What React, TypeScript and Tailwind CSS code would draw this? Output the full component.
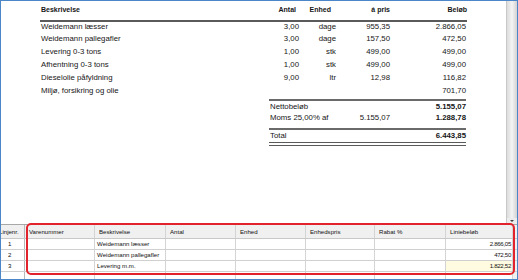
import React from "react";

const rows = [
  { d: "Weidemann læsser", a: "3,00", e: "dage", p: "955,35", b: "2.866,05" },
  { d: "Weidemann pallegafler", a: "3,00", e: "dage", p: "157,50", b: "472,50" },
  { d: "Levering 0-3 tons", a: "1,00", e: "stk", p: "499,00", b: "499,00" },
  { d: "Afhentning 0-3 tons", a: "1,00", e: "stk", p: "499,00", b: "499,00" },
  { d: "Dieselolie påfyldning", a: "9,00", e: "ltr", p: "12,98", b: "116,82" },
  { d: "Miljø, forsikring og olie", a: "", e: "", p: "", b: "701,70" },
];

const gridCols = "grid grid-cols-[24px_70px_71px_70px_70px_69px_71px_67px_1fr]";

const headers = ["Varenummer", "Beskrivelse", "Antal", "Enhed", "Enhedspris", "Rabat %", "Liniebeløb"];

const gridRows = [
  { n: "1", d: "Weidemann læsser", v: "2.866,05", hl: false },
  { n: "2", d: "Weidemann pallegafler", v: "472,50", hl: false },
  { n: "3", d: "Levering m.m.", v: "1.822,52", hl: true },
  { n: "", d: "", v: "", hl: false },
];

export default function App() {
  return (
    <div className="relative w-[518px] h-[280px] overflow-hidden bg-white border border-[#4a86c8] font-['Liberation_Sans',Arial,sans-serif] text-[#161616]">
      {/* Document area */}
      <div className="flex h-[223px]">
        <div className="flex-1 pl-[40px]">
          <div className="grid grid-cols-[219px_39px_37px_54px_76px] h-[19px] items-center text-[7px] font-bold">
            <div>Beskrivelse</div>
            <div className="text-right pr-[3px]">Antal</div>
            <div className="text-right pr-[5px]">Enhed</div>
            <div className="text-right">á pris</div>
            <div className="text-right -mr-[1px]">Beløb</div>
          </div>
          <div className="w-[427px] -ml-[1px] h-[2px] bg-[#5a5a5a]" />
          <div className="-mt-[2px] text-[7.8px]">
            {rows.map((r, i) => (
              <div key={i} className="grid grid-cols-[219px_39px_37px_54px_76px] h-[12.8px] items-center">
                <div className="whitespace-nowrap">{r.d}</div>
                <div className="text-right">{r.a}</div>
                <div className="text-right">{r.e}</div>
                <div className="text-right">{r.p}</div>
                <div className="text-right">{r.b}</div>
              </div>
            ))}
          </div>
          <div className="ml-[228px] w-[197px] mt-[2px] h-[2px] bg-[#6a6a6a]" />
          <div className="ml-[229px] text-[7.8px]">
            <div className="grid grid-cols-[66px_54px_76px] h-[11px] items-center">
              <div>Nettobeløb</div>
              <div />
              <div className="text-right font-bold">5.155,07</div>
            </div>
            <div className="grid grid-cols-[66px_54px_76px] h-[12px] items-center">
              <div className="whitespace-nowrap">Moms 25,00% af</div>
              <div className="text-right">5.155,07</div>
              <div className="text-right font-bold">1.288,78</div>
            </div>
          </div>
          <div className="ml-[228px] w-[197px] mt-[4px] h-[2px] bg-[#6a6a6a]" />
          <div className="ml-[229px] text-[7.8px]">
            <div className="grid grid-cols-[66px_54px_76px] h-[11px] items-center">
              <div>Total</div>
              <div />
              <div className="text-right font-bold">6.443,85</div>
            </div>
          </div>
          <div className="ml-[228px] w-[197px] mt-[1px] h-[1.5px] bg-[#5a5a5a]" />
          <div className="ml-[228px] w-[197px] mt-[1.5px] h-[1.5px] bg-[#5a5a5a]" />
        </div>
        {/* Scrollbar */}
        <div className="w-[11px] flex flex-col border-l border-[#c8c8c8]">
          <div className="flex-1 bg-gradient-to-r from-[#dcdcdc] via-[#f4f4f4] to-[#d2d2d2]" />
          <div className="h-[6px] bg-[#ececec] flex items-center justify-center">
            <div className="w-0 h-0 border-l-[2px] border-r-[2px] border-t-[2px] border-l-transparent border-r-transparent border-t-[#404040]" />
          </div>
        </div>
      </div>

      {/* Grid */}
      <div className="border-t border-[#a8a8a8] text-[6.1px] text-[#111]">
        <div className={`${gridCols} h-[14px] bg-[#f0f0f0] border-b border-[#c8c8c8]`}>
          <div className="overflow-hidden whitespace-nowrap border-r border-[#b8b8b8] flex items-center">
            <span className="-ml-[2px]">Linjenr.</span>
          </div>
          {headers.map((h) => (
            <div key={h} className="border-r border-[#d4d4d4] flex items-center pl-[4px] whitespace-nowrap">
              {h}
            </div>
          ))}
          <div />
        </div>
        {gridRows.map((r, i) => (
          <div key={i} className={`${gridCols} h-[11px] border-b border-[#d0d0d0]`}>
            <div className="border-r border-[#b8b8b8] flex items-center pl-[7px]">{r.n}</div>
            <div className="border-r border-[#d4d4d4]" />
            <div className="border-r border-[#d4d4d4] flex items-center pl-[2px] whitespace-nowrap">{r.d}</div>
            <div className="border-r border-[#d4d4d4]" />
            <div className="border-r border-[#d4d4d4]" />
            <div className="border-r border-[#d4d4d4]" />
            <div className="border-r border-[#d4d4d4]" />
            <div className={`border-r border-[#d4d4d4] flex items-center justify-end pr-[1px] ${r.hl ? "bg-[#fffbe0]" : ""}`}>
              <span className="tracking-[-0.3px]">{r.v}</span>
            </div>
            <div className="bg-[#f0f0f0]" />
          </div>
        ))}
      </div>

      {/* Red annotation */}
      <div className="absolute left-[25px] top-[222px] w-[489px] h-[52px] border-2 border-[#e3232b] rounded-[5px] pointer-events-none" />
    </div>
  );
}
